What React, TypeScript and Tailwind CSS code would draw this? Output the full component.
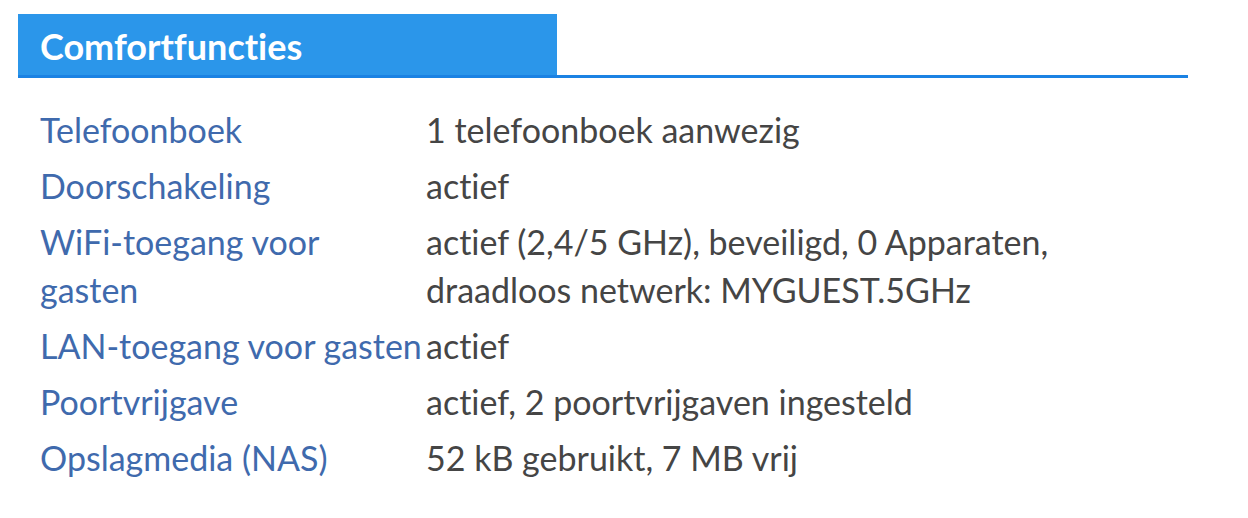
import React from "react";

const rows: { k: string; v: string; narrow?: boolean }[] = [
  { k: "Telefoonboek", v: "1 telefoonboek aanwezig" },
  { k: "Doorschakeling", v: "actief" },
  {
    k: "WiFi-toegang voor gasten",
    v: "actief (2,4/5 GHz), beveiligd, 0 Apparaten, draadloos netwerk: MYGUEST.5GHz",
    narrow: true,
  },
  { k: "LAN-toegang voor gasten", v: "actief" },
  { k: "Poortvrijgave", v: "actief, 2 poortvrijgaven ingesteld" },
  { k: "Opslagmedia (NAS)", v: "52 kB gebruikt, 7 MB vrij" },
];

export default function App() {
  return (
    <div
      className="w-[1248px] h-[518px] bg-white pl-[18px] pt-[14px] [font-variant-ligatures:none]"
      style={{ fontFamily: "Lato, 'Noto Sans', sans-serif" }}
    >
      <div className="w-[1170px]">
        <div className="flex border-b-[3px] border-[#1b82e3]">
          <div className="w-[539px] h-[61px] bg-[#2b96ea] pl-[22px] pt-[3px] flex items-center">
            <span className="text-white font-bold text-[36px] leading-none">Comfortfuncties</span>
          </div>
        </div>
        <div className="mt-[24px] pl-[22px] grid grid-cols-[386px_650px] text-[34px] leading-[48px]">
          {rows.map((r) => (
            <React.Fragment key={r.k}>
              <div className="py-[4px] text-[#3f6aad]">
                <div className={r.narrow ? "max-w-[340px]" : ""}>{r.k}</div>
              </div>
              <div className="py-[4px] text-[#454545]">{r.v}</div>
            </React.Fragment>
          ))}
        </div>
      </div>
    </div>
  );
}
